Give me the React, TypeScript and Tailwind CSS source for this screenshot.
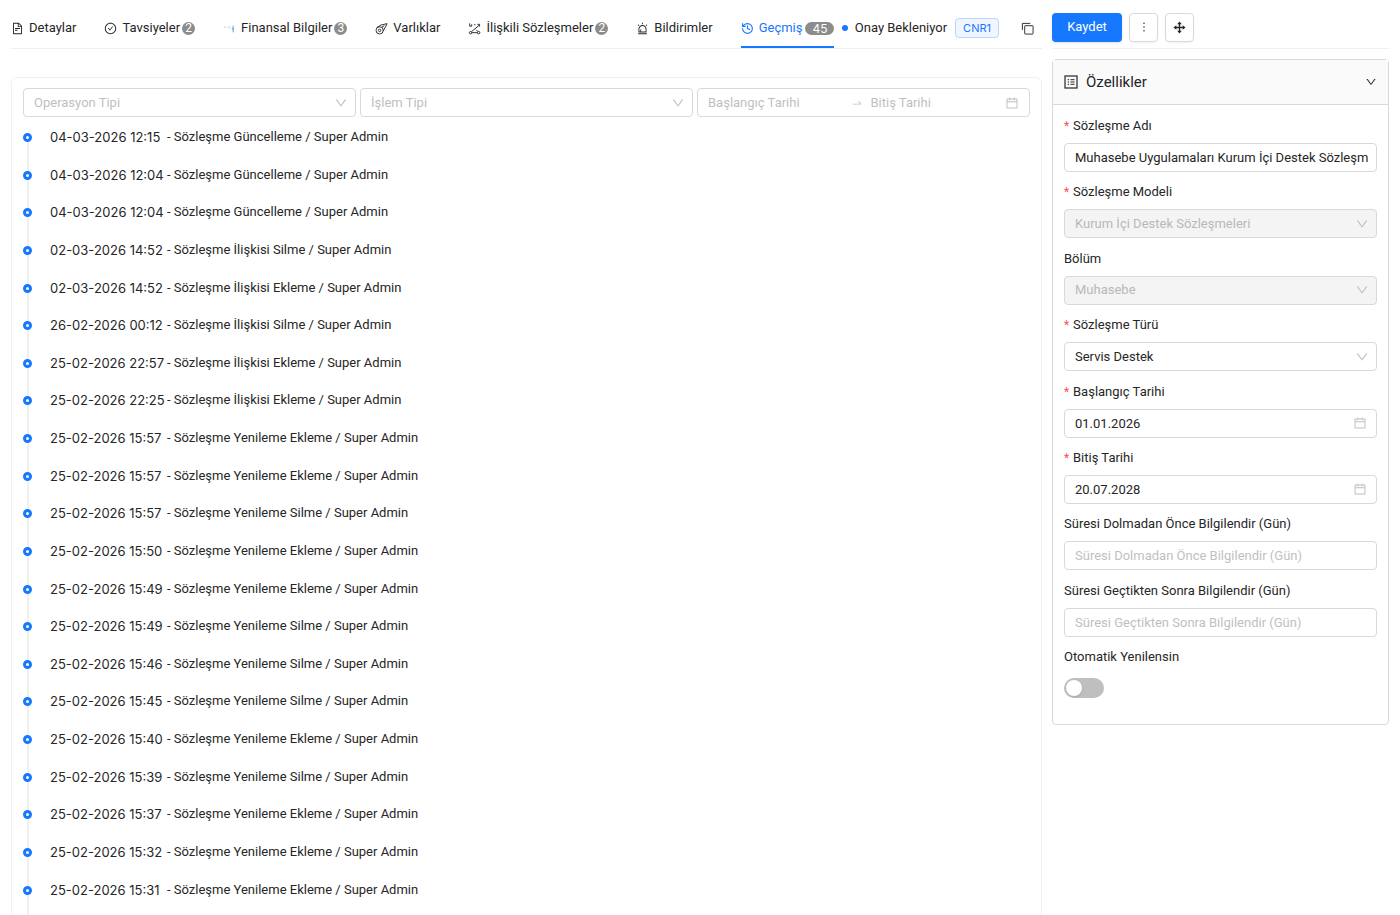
import { useState } from "react";
import {
  AiOutlineAlert,
  AiOutlineCalendar,
  AiOutlineCheckCircle,
  AiOutlineDown,
  AiOutlineFileText,
  AiOutlineMore,
  AiOutlineSwapRight,
} from "react-icons/ai";
import { History } from "lucide-react";

type IconProps = { className?: string };

function FinanceIcon({ className }: IconProps) {
  return (
    <svg className={className} viewBox="0 0 14 14" fill="none" aria-hidden="true">
      <path d="M1 5.500h2.500M5 5.500h3" stroke="#c4c8d0" />
      <path d="M6.500 6.500v1" stroke="#e3d5d0" />
      <path d="M11 4v7" stroke="#8fb4f5" strokeWidth="1.500" />
      <path d="M9.500 7.500h2" stroke="#5b7fd0" />
    </svg>
  );
}

function AssetIcon({ className }: IconProps) {
  return (
    <svg className={className} viewBox="0 0 14 14" fill="none" stroke="currentColor" aria-hidden="true">
      <path d="M2 6 6.500 3.200 13 1.800l-2 4-2.300 4" strokeLinejoin="round" />
      <circle cx="5" cy="9" r="3.900" />
      <circle cx="5" cy="9" r="1.300" />
      <path d="m7.500 5.500 2.500-1.500" />
    </svg>
  );
}

function RelationIcon({ className }: IconProps) {
  return (
    <svg className={className} viewBox="0 0 14 14" fill="none" stroke="currentColor" aria-hidden="true">
      <circle cx="2.800" cy="11.500" r="1.300" />
      <circle cx="11.500" cy="11.500" r="1.300" />
      <path d="M4.100 11.500h6.100M3.800 10.400 12 3.500M1.800 1.500v3h2.200V2.500M6.500 3h1.500M10 2.500h2.500v2.500M9 8.500l1.500 1.800" />
    </svg>
  );
}

function CopyIcon({ className }: IconProps) {
  return (
    <svg className={className} viewBox="0 0 14 14" fill="none" stroke="currentColor" aria-hidden="true">
      <rect x="4" y="4" width="9" height="9" rx="0.500" />
      <path d="M1.500 8.500v-7h8.500" />
    </svg>
  );
}

function MoveIcon({ className }: IconProps) {
  return (
    <svg className={className} viewBox="0 0 14 14" aria-hidden="true">
      <path d="M7 2v10M2 7h10" stroke="currentColor" strokeWidth="1.500" />
      <path d="M7 .5 9.500 3.600h-5zM7 13.500l2.500-3.100h-5zM.5 7l3.100-2.500v5zM13.500 7l-3.100-2.500v5z" fill="currentColor" />
    </svg>
  );
}

function PropertiesIcon({ className }: IconProps) {
  return (
    <svg className={className} viewBox="0 0 14 14" fill="none" stroke="currentColor" aria-hidden="true">
      <rect x="1" y="1" width="12" height="12" strokeWidth="1.200" />
      <path d="M3.700 4.700h1.400M3.700 7h1.400M3.700 9.300h1.400M6.500 4.700h4M6.500 7h4M6.500 9.300h4" />
    </svg>
  );
}

const tabs = [
  { label: "Detaylar", icon: AiOutlineFileText },
  { label: "Tavsiyeler", icon: AiOutlineCheckCircle, count: 2 },
  { label: "Finansal Bilgiler", icon: FinanceIcon, count: 3 },
  { label: "Varlıklar", icon: AssetIcon },
  { label: "İlişkili Sözleşmeler", icon: RelationIcon, count: 2 },
  { label: "Bildirimler", icon: AiOutlineAlert },
  { label: "Geçmiş", icon: History, count: 45 },
];

const history = [
  { date: "04-03-2026 12:15", action: "Sözleşme Güncelleme" },
  { date: "04-03-2026 12:04", action: "Sözleşme Güncelleme" },
  { date: "04-03-2026 12:04", action: "Sözleşme Güncelleme" },
  { date: "02-03-2026 14:52", action: "Sözleşme İlişkisi Silme" },
  { date: "02-03-2026 14:52", action: "Sözleşme İlişkisi Ekleme" },
  { date: "26-02-2026 00:12", action: "Sözleşme İlişkisi Silme" },
  { date: "25-02-2026 22:57", action: "Sözleşme İlişkisi Ekleme" },
  { date: "25-02-2026 22:25", action: "Sözleşme İlişkisi Ekleme" },
  { date: "25-02-2026 15:57", action: "Sözleşme Yenileme Ekleme" },
  { date: "25-02-2026 15:57", action: "Sözleşme Yenileme Ekleme" },
  { date: "25-02-2026 15:57", action: "Sözleşme Yenileme Silme" },
  { date: "25-02-2026 15:50", action: "Sözleşme Yenileme Ekleme" },
  { date: "25-02-2026 15:49", action: "Sözleşme Yenileme Ekleme" },
  { date: "25-02-2026 15:49", action: "Sözleşme Yenileme Silme" },
  { date: "25-02-2026 15:46", action: "Sözleşme Yenileme Silme" },
  { date: "25-02-2026 15:45", action: "Sözleşme Yenileme Silme" },
  { date: "25-02-2026 15:40", action: "Sözleşme Yenileme Ekleme" },
  { date: "25-02-2026 15:39", action: "Sözleşme Yenileme Silme" },
  { date: "25-02-2026 15:37", action: "Sözleşme Yenileme Ekleme" },
  { date: "25-02-2026 15:32", action: "Sözleşme Yenileme Ekleme" },
  { date: "25-02-2026 15:31", action: "Sözleşme Yenileme Ekleme" },
];

type Field = {
  id: string;
  label: string;
  type: "text" | "select" | "date";
  value?: string;
  required?: boolean;
  disabled?: boolean;
};

const fields: Field[] = [
  { id: "name", label: "Sözleşme Adı", type: "text", value: "Muhasebe Uygulamaları Kurum İçi Destek Sözleşmesi", required: true },
  { id: "model", label: "Sözleşme Modeli", type: "select", value: "Kurum İçi Destek Sözleşmeleri", required: true, disabled: true },
  { id: "department", label: "Bölüm", type: "select", value: "Muhasebe", disabled: true },
  { id: "kind", label: "Sözleşme Türü", type: "select", value: "Servis Destek", required: true },
  { id: "start", label: "Başlangıç Tarihi", type: "date", value: "01.01.2026", required: true },
  { id: "end", label: "Bitiş Tarihi", type: "date", value: "20.07.2028", required: true },
  { id: "notify-before", label: "Süresi Dolmadan Önce Bilgilendir (Gün)", type: "text" },
  { id: "notify-after", label: "Süresi Geçtikten Sonra Bilgilendir (Gün)", type: "text" },
];

function FilterSelect({ label }: { label: string }) {
  return (
    <div className="grid items-center">
      <select
        aria-label={label}
        className="col-start-1 row-start-1 h-[29px] w-full appearance-none rounded-sm border border-[#d9d9d9] bg-white px-2.5 text-[#bfbfbf]"
      >
        <option>{label}</option>
      </select>
      <AiOutlineDown className="pointer-events-none col-start-1 row-start-1 mr-2 size-3.5 justify-self-end text-[#bfbfbf]" />
    </div>
  );
}

function FormField({ field }: { field: Field }) {
  const { id, label, type, value, required, disabled } = field;

  return (
    <div className="flex flex-col">
      <label htmlFor={id} className="flex h-[34px] items-center">
        {required && <span className="mr-1 w-[5px] text-xs text-[#ff4d4f]">*</span>}
        {label}
      </label>
      <div className="grid items-center">
        {type === "select" ? (
          <select
            id={id}
            disabled={disabled}
            className="col-start-1 row-start-1 h-[29px] w-full appearance-none rounded-sm border border-[#d9d9d9] bg-white px-2.5 opacity-100 disabled:bg-[#f4f4f4] disabled:text-[#b8b8b8]"
          >
            <option>{value}</option>
          </select>
        ) : (
          <input
            id={id}
            defaultValue={value}
            placeholder={label}
            className="col-start-1 row-start-1 h-[29px] w-full rounded-sm border border-[#d9d9d9] pr-2 pl-2.5 placeholder:text-[#bfbfbf]"
          />
        )}
        {type === "select" && (
          <AiOutlineDown className="pointer-events-none col-start-1 row-start-1 mr-2 size-3.5 justify-self-end text-[#bfbfbf]" />
        )}
        {type === "date" && (
          <AiOutlineCalendar className="pointer-events-none col-start-1 row-start-1 mr-2.5 size-3.5 justify-self-end text-[#bfbfbf]" />
        )}
      </div>
    </div>
  );
}

export default function App() {
  const [activeTab, setActiveTab] = useState("Geçmiş");
  const [autoRenew, setAutoRenew] = useState(false);

  return (
    <div className="flex min-h-screen gap-x-2.5 bg-white px-[11px] font-['Roboto',sans-serif] text-[13px] leading-5 text-[#262626]">
      <main className="flex min-w-0 flex-1 flex-col">
        <div className="flex h-[49px] items-end justify-between border-b border-[#f0f0f0]">
          <nav className="flex gap-x-7">
            {tabs.map(({ label, icon: Icon, count }) => (
              <button
                key={label}
                className={
                  activeTab === label
                    ? "flex h-[38px] items-center border-b-2 border-[#1677ff] text-[#1677ff]"
                    : "flex h-[38px] items-center border-b-2 border-transparent"
                }
                onClick={() => setActiveTab(label)}
              >
                <Icon className="mr-[5px] size-[13px] shrink-0" />
                <span className="whitespace-nowrap">{label}</span>
                {count && (
                  <span
                    className={
                      count > 9
                        ? "ml-[3px] h-[13px] w-[29px] rounded-full bg-[#8c8c8c] font-['Inter',sans-serif] text-xs leading-[13px] text-white"
                        : "ml-0.5 size-[13px] rounded-full bg-[#8c8c8c] text-xs leading-[13px] text-white"
                    }
                  >
                    {count}
                  </span>
                )}
              </button>
            ))}
          </nav>
          <div className="flex h-10 shrink-0 items-center pr-2">
            <span className="mr-[7px] size-1.5 rounded-full bg-[#1677ff]" />
            <span>Onay Bekleniyor</span>
            <span className="ml-2 rounded-sm border border-[#bad6ff] bg-[#f0f5ff] px-[7px] font-['Inter',sans-serif] text-[11px] leading-[18px] text-[#1677ff]">
              CNR1
            </span>
            <button aria-label="Kopyala" className="ml-[22px]">
              <CopyIcon className="size-[13px]" />
            </button>
          </div>
        </div>

        <section className="mt-7 flex flex-1 flex-col rounded-t-md border border-b-0 border-[#f0f0f0] px-[11px] pt-2.5">
          <div className="grid grid-cols-3 gap-x-1">
            <FilterSelect label="Operasyon Tipi" />
            <FilterSelect label="İşlem Tipi" />
            <div className="flex h-[29px] items-center rounded-sm border border-[#d9d9d9] px-2.5 text-[#bfbfbf]">
              <input aria-label="Başlangıç Tarihi" placeholder="Başlangıç Tarihi" className="min-w-0 flex-1 placeholder:text-[#bfbfbf]" />
              <AiOutlineSwapRight className="mx-2 size-3 shrink-0" />
              <input aria-label="Bitiş Tarihi" placeholder="Bitiş Tarihi" className="min-w-0 flex-1 placeholder:text-[#bfbfbf]" />
              <AiOutlineCalendar className="size-3.5 shrink-0" />
            </div>
          </div>

          <ul className="mt-2 flex flex-1 flex-col">
            {history.map((item, index) => (
              <li key={`history-${index}`} className="flex flex-1 gap-x-[18px]">
                <div className="flex w-[9px] flex-col items-center">
                  <span className={index === 0 ? "h-2" : "h-2 w-0.5 bg-[#f0f0f0]"} />
                  <span className="size-[9px] shrink-0 rounded-full border-[3px] border-[#1677ff] bg-white" />
                  <span className="w-0.5 flex-1 bg-[#f0f0f0]" />
                </div>
                <div className="flex pb-3 leading-6">
                  <span className="w-[117px] whitespace-nowrap font-['Inter',sans-serif]">{item.date}</span>
                  <span>{`- ${item.action} / Super Admin`}</span>
                </div>
              </li>
            ))}
          </ul>
        </section>
      </main>

      <aside className="flex w-[337px] shrink-0 flex-col">
        <div className="flex h-[49px] items-center gap-x-[7px] border-b border-[#f0f0f0] pt-1.5">
          <button className="h-[29px] w-[70px] rounded-sm bg-[#1677ff] text-white shadow-sm">Kaydet</button>
          <button aria-label="Diğer" className="flex size-[29px] items-center justify-center rounded-sm border border-[#d9d9d9] shadow-xs">
            <AiOutlineMore className="size-3.5" />
          </button>
          <button aria-label="Taşı" className="flex size-[29px] items-center justify-center rounded-sm border border-[#d9d9d9] shadow-xs">
            <MoveIcon className="size-[13px]" />
          </button>
        </div>

        <section className="mt-2.5 rounded-sm border border-[#d9d9d9]">
          <button className="flex h-[45px] w-full items-center border-b border-[#d9d9d9] bg-[#fafafa] px-[11px]">
            <PropertiesIcon className="size-3.5" />
            <span className="ml-2 text-[15px]">Özellikler</span>
            <AiOutlineDown className="ml-auto size-3" />
          </button>
          <div className="px-[11px] pt-1 pb-[22px]">
            <div className="grid h-[531px] auto-rows-fr">
              {fields.map((field) => (
                <FormField key={field.id} field={field} />
              ))}
            </div>
            <label htmlFor="auto-renew" className="flex h-[34px] items-center">
              Otomatik Yenilensin
            </label>
            <input
              id="auto-renew"
              type="checkbox"
              role="switch"
              checked={autoRenew}
              onChange={() => setAutoRenew(!autoRenew)}
              className="my-1 block h-5 w-10 appearance-none rounded-full bg-[#bfbfbf] p-0.5 before:block before:size-4 before:rounded-full before:bg-white before:shadow-sm checked:bg-[#1677ff] checked:before:ml-5"
            />
          </div>
        </section>
      </aside>
    </div>
  );
}
